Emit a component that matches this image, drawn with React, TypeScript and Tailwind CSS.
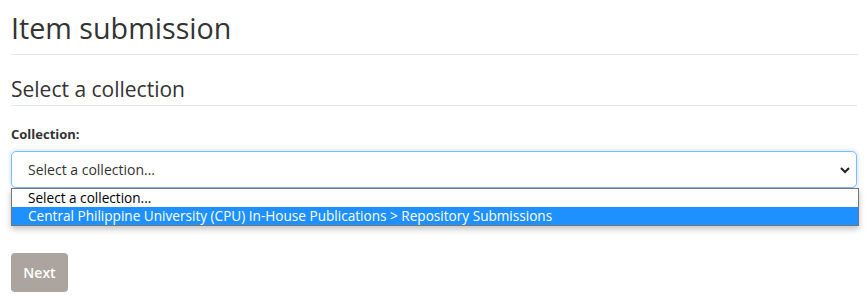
import React from "react";

export default function App() {
  const font = { fontFamily: '"Open Sans", "Noto Sans", sans-serif' };
  return (
    <div className="w-[868px] h-[308px] bg-white text-[#2b2b2b] overflow-hidden" style={font}>
      <div className="px-[11px] pt-[8px]">
        <h2 className="text-[28.7px] leading-[40px] font-normal text-[#333] pb-[6px] border-b border-[#e6e6e6] mr-[-1px]">
          Item submission
        </h2>
        <h3 className="mt-[21px] text-[21px] leading-[26px] text-[#333] pb-[3px] border-b border-[#e6e6e6]">
          Select a collection
        </h3>
        <div className="mt-[19px] text-[13px] font-bold leading-[18px] text-[#333]">Collection:</div>
        <div className="relative mt-[8px]">
          <div className="h-[37px] flex items-center justify-between rounded-[5px] border border-[#80bdff] shadow-[0_0_4px_rgba(0,123,255,0.3)] pl-[16px] pr-[4px] text-[14px] text-[#333]">
            <span>Select a collection...</span>
            <svg width="12" height="8" viewBox="0 0 12 8" className="mr-[1px]">
              <path d="M2 2 L6 6 L10 2" fill="none" stroke="#222" strokeWidth="2" />
            </svg>
          </div>
          <div className="absolute left-0 top-[37px] w-[848px] border border-[#767676] bg-white shadow-[0_3px_6px_rgba(0,0,0,0.25)] text-[13.6px] leading-[18px]">
            <div className="pl-[16px] h-[18px] text-black">Select a collection...</div>
            <div className="pl-[16px] h-[18px] bg-[#1e90ff] text-white">
              Central Philippine University (CPU) In-House Publications &gt; Repository Submissions
            </div>
          </div>
        </div>
        <div className="mt-[65px]">
          <button className="h-[39px] w-[57px] rounded-[4px] bg-[#aca59f] text-white text-[14px] font-semibold">
            Next
          </button>
        </div>
      </div>
    </div>
  );
}
